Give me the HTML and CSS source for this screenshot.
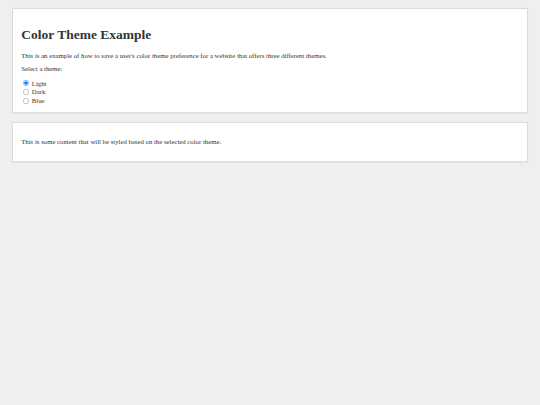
FILE: index.html
```html
<!DOCTYPE html>
<html>
<head>
<meta charset="utf-8">
<link rel="stylesheet" href="styles.css">
</head>
<body>
<div class="container">
  <div class="card">
    <h1 class="title">Color Theme Example</h1>
    <p class="text">This is an example of how to save a user's color theme preference for a website that offers three different themes.</p>
    <p class="text">Select a theme:</p>
    <div class="options">
      <label class="option"><input type="radio" name="theme" class="radio" checked> Light</label>
      <label class="option"><input type="radio" name="theme" class="radio"> Dark</label>
      <label class="option"><input type="radio" name="theme" class="radio"> Blue</label>
    </div>
  </div>
  <div class="card card-plain">
    <p class="text">This is some content that will be styled based on the selected color theme.</p>
  </div>
</div>
</body>
</html>
```

FILE: styles.css
```css
html {
  zoom: 0.421875;
  background: #efefef;
  overflow: hidden;
}
body {
  margin: 0;
  font-family: "Liberation Serif", "Times New Roman", serif;
  font-size: 16px;
  color: #333;
}
.container {
  padding: 20px 28px;
  display: flex;
  flex-direction: column;
  gap: 22px;
}
.card {
  background: #fff;
  border: 1px solid #dcdcdc;
  border-radius: 2px;
  box-shadow: 0 1px 3px rgba(0,0,0,0.05);
  padding: 0 20px;
}
.title {
  font-size: 32px;
  font-weight: bold;
  margin: 41px 0 21px;
}
.text {
  margin: 16px 0;
}
.title + .text {
  margin-top: 0;
}
.options {
  padding-top: 1px;
  padding-bottom: 14px;
}
.option {
  display: block;
  height: 21px;
  line-height: 21px;
}
.radio {
  width: 13px;
  height: 13px;
  margin: 0 3px 0 5px;
  vertical-align: -1px;
}
.card-plain {
  padding: 36px 20px;
}
.card-plain .text {
  margin: 0;
}
```
